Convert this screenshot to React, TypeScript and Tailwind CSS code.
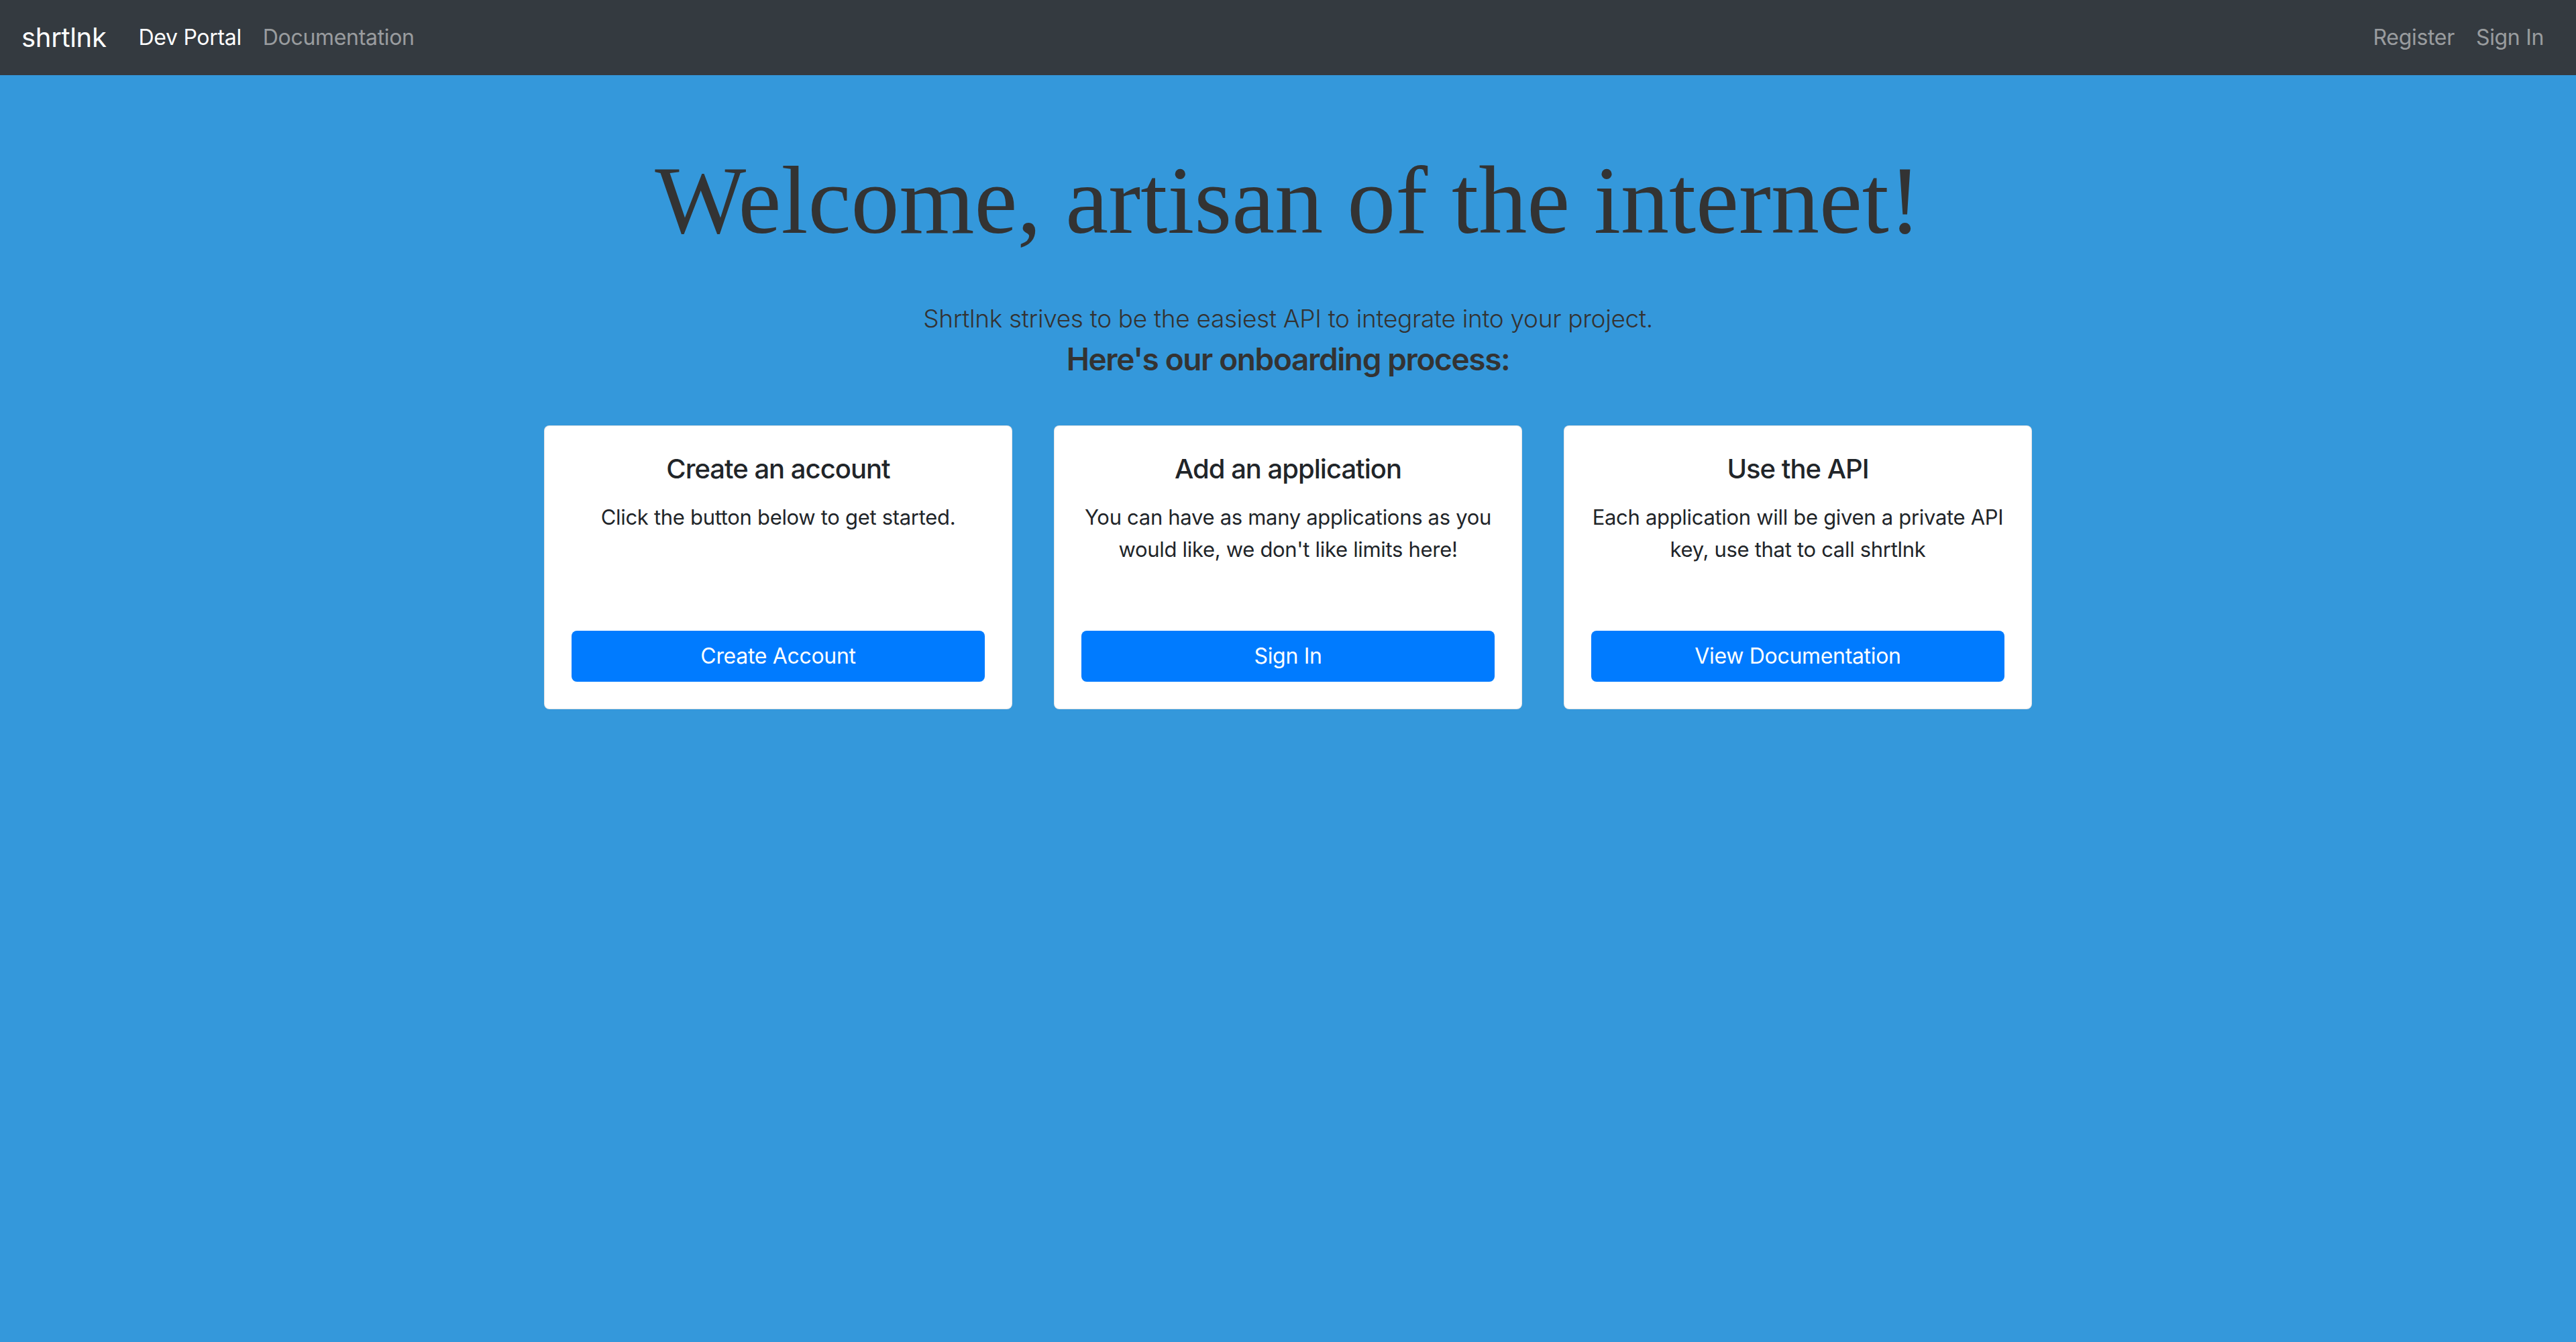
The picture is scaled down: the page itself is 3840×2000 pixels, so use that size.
import React from 'react';

const steps = [
    { title: 'Create an account', text: 'Click the button below to get started.', button: 'Create Account' },
    { title: 'Add an application', text: "You can have as many applications as you would like, we don't like limits here!", button: 'Sign In' },
    { title: 'Use the API', text: 'Each application will be given a private API key, use that to call shrtlnk', button: 'View Documentation' },
];

const Navbar: React.FC = () => (
    <nav className="flex h-[112px] items-center justify-between bg-[#343a40] px-[32px]">
        <div className="flex items-center">
            <a className="mr-[32px] text-[40px] leading-[60px] text-white">shrtlnk</a>
            <a className="px-[16px] text-[32px] leading-[48px] text-white">Dev Portal</a>
            <a className="px-[16px] text-[32px] leading-[48px] text-white/50">Documentation</a>
        </div>
        <div className="flex items-center">
            <a className="px-[16px] text-[32px] leading-[48px] text-white/50">Register</a>
            <a className="px-[16px] text-[32px] leading-[48px] text-white/50">Sign In</a>
        </div>
    </nav>
);

const StepCard: React.FC<{ title: string; text: string; button: string }> = ({ title, text, button }) => (
    <div className="flex h-[423px] w-[698px] flex-col rounded-[8px] border border-black/10 bg-white p-[40px] text-center text-[#212529]">
        <h5 className="text-[40px] font-medium leading-[48px] tracking-[-0.025em]">{title}</h5>
        <p className="-mx-[8px] mt-[24px] text-[31px] leading-[48px] tracking-[-0.01em]">{text}</p>
        <button className="mt-auto h-[76px] w-full rounded-[8px] bg-[#007bff] text-[32px] text-white">{button}</button>
    </div>
);

export default function App() {
    return (
        <div className="min-h-screen bg-[#3498db] font-['Inter',sans-serif] tracking-[-0.02em]">
            <Navbar />
            <main className="flex flex-col items-center">
                <h1 className="mt-[101px] font-['Liberation_Serif',serif] text-[144px] leading-[1.2] tracking-normal text-[#333]">
                    Welcome, artisan of the internet!
                </h1>
                <p className="mt-[59px] text-[37px] font-light leading-[60px] text-[#333]">
                    Shrtlnk strives to be the easiest API to integrate into your project.
                </p>
                <h4 className="text-[46px] font-semibold leading-[60px] tracking-[-0.03em] text-[#333]">Here's our onboarding process:</h4>
                <div className="mt-[69px] flex gap-[62px]">
                    {steps.map(s => (
                        <StepCard key={s.title} {...s} />
                    ))}
                </div>
            </main>
        </div>
    );
}
